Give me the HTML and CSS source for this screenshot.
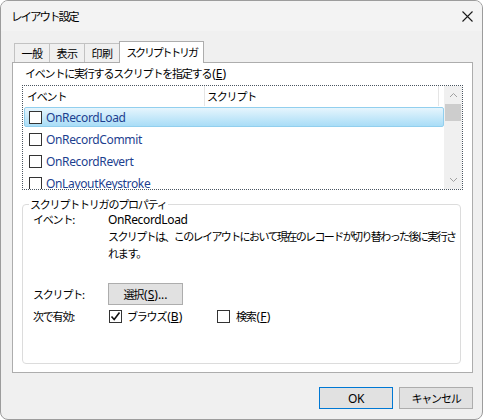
FILE: index.html
```html
<!DOCTYPE html>
<html lang="ja">
<head>
<meta charset="utf-8">
<title>レイアウト設定</title>
<link rel="stylesheet" href="styles.css">
</head>
<body>
<div class="window">
  <div class="titlebar">
    <span class="title">レイアウト設定</span>
    <svg class="close" width="11" height="11" viewBox="0 0 11 11"><path d="M0.5 0.5 L10.5 10.5 M10.5 0.5 L0.5 10.5" stroke="#1a1a1a" stroke-width="1.1" fill="none"/></svg>
  </div>
  <div class="body">
    <div class="tabs">
      <div class="tab">一般</div>
      <div class="tab">表示</div>
      <div class="tab">印刷</div>
      <div class="tab active">スクリプトトリガ</div>
    </div>
    <div class="panel">
      <div class="caption">イベントに実行するスクリプトを指定する<span class="k">(<u>E</u>)</span></div>
      <div class="listbox">
        <div class="listmain">
          <div class="lhead">
            <div class="col1">イベント</div>
            <div class="col2">スクリプト</div>
          </div>
          <div class="row"><div class="rowin sel"><span class="cb"></span><span class="lat">OnRecordLoad</span></div></div>
          <div class="row"><div class="rowin"><span class="cb"></span><span class="lat">OnRecordCommit</span></div></div>
          <div class="row"><div class="rowin"><span class="cb"></span><span class="lat">OnRecordRevert</span></div></div>
          <div class="row"><div class="rowin"><span class="cb"></span><span class="lat">OnLayoutKeystroke</span></div></div>
        </div>
        <div class="scroll">
          <div class="sbtn"><svg width="9" height="6" viewBox="0 0 9 6"><path d="M1 5 L4.5 1.5 L8 5" stroke="#a0a0a0" stroke-width="1" fill="none"/></svg></div>
          <div class="thumb"></div>
          <div class="track"></div>
          <div class="sbtn"><svg width="9" height="6" viewBox="0 0 9 6"><path d="M1 1 L4.5 4.5 L8 1" stroke="#a0a0a0" stroke-width="1" fill="none"/></svg></div>
        </div>
      </div>
      <fieldset class="group">
        <legend>スクリプトトリガのプロパティ</legend>
        <div class="prop">
          <div class="plabel">イベント:</div>
          <div class="pval"><span class="lat">OnRecordLoad</span><br><span class="desc">スクリプトは、このレイアウトにおいて現在のレコードが切り替わった後に実行さ</span><br>れます。</div>
        </div>
        <div class="prop scriptrow">
          <div class="plabel">スクリプト:</div>
          <div class="pval"><button class="btn select">選択<span class="k">(<u>S</u>)...</span></button></div>
        </div>
        <div class="prop enablerow">
          <div class="plabel">次で有効:</div>
          <div class="pval checks">
            <span class="chk browse"><span class="cb checked"><svg width="11" height="11" viewBox="0 0 11 11"><path d="M1.5 5.5 L4.2 8.5 L9.5 1.5" stroke="#111" stroke-width="1.6" fill="none"/></svg></span>ブラウズ<span class="k">(<u>B</u>)</span></span>
            <span class="chk find"><span class="cb"></span>検索<span class="k">(<u>F</u>)</span></span>
          </div>
        </div>
      </fieldset>
    </div>
    <div class="buttons">
      <button class="btn dlg default"><span class="lat">OK</span></button>
      <button class="btn dlg">キャンセル</button>
    </div>
  </div>
</div>
</body>
</html>
```

FILE: styles.css
```css
* { box-sizing: border-box; }
html, body { margin: 0; padding: 0; background: #ffffff; }
.window {
  width: 483px;
  height: 420px;
  border: 1px solid #9c9c9c;
  border-radius: 8px;
  background: #f0f0f0;
  overflow: hidden;
  font-family: "Noto Sans CJK JP", sans-serif;
  font-size: 11px;
  letter-spacing: -1.2px;
  color: #000;
  display: flex;
  flex-direction: column;
}
.lat {
  font-family: "Noto Sans", sans-serif;
  font-size: 12px;
  letter-spacing: -0.35px;
}
.k {
  font-family: "Noto Sans", sans-serif;
  font-size: 12px;
  letter-spacing: 0;
  margin-left: 1px;
}
.titlebar {
  height: 30px;
  display: flex;
  align-items: center;
  justify-content: space-between;
  padding: 0 9px 0 10px;
  background: #f3f3f3;
}
.title { font-size: 11.5px; letter-spacing: -2px; }
.close { display: block; }
.body {
  flex: 1;
  padding: 10px 9px 0 11px;
  display: flex;
  flex-direction: column;
}
.tabs {
  display: flex;
  align-items: flex-end;
  height: 21px;
  padding-left: 2px;
}
.tab {
  width: 36px;
  height: 19px;
  border: 1px solid #c2c2c2;
  border-bottom: none;
  margin-left: -1px;
  background: #f0f0f0;
  display: flex;
  align-items: center;
  justify-content: center;
  line-height: 16px;
  white-space: nowrap;
  letter-spacing: -0.6px;
}
.tab:first-child { margin-left: 0; }
.tab.active {
  width: 85px;
  height: 22px;
  margin-bottom: -1px;
  background: #ffffff;
  border-color: #adadad;
  position: relative;
  z-index: 1;
  padding-bottom: 2px;
  letter-spacing: -2.2px;
}
.panel {
  height: 311px;
  border: 1px solid #adadad;
  background: #ffffff;
  padding: 2px 9px 0 9px;
}
.caption {
  line-height: 16px;
  padding-left: 3px;
  white-space: nowrap;
}
u { text-underline-offset: 1px; }
.listbox {
  margin-top: 3px;
  width: 441px;
  height: 105px;
  border: 1px dotted #4a5560;
  display: flex;
  overflow: hidden;
}
.listmain {
  flex: 1;
  overflow: hidden;
}
.lhead {
  height: 20px;
  display: flex;
  line-height: 20px;
}
.col1 {
  width: 181px;
  padding-left: 4px;
}
.col2 {
  width: 235px;
  border-left: 1px solid #e5e5e5;
  border-right: 1px solid #e5e5e5;
  padding-left: 2px;
}
.row {
  height: 22px;
  padding-top: 1px;
}
.rowin {
  height: 20px;
  margin-left: 1px;
  display: flex;
  align-items: center;
  padding-left: 4px;
  color: #1d3f8f;
  white-space: nowrap;
  border: 1px solid transparent;
}
.rowin.sel {
  background: linear-gradient(#e6f5fd, #a9ddf7);
  border-color: #92cfee;
  border-radius: 2px;
}
.cb {
  width: 13px;
  height: 13px;
  border: 1px solid #333333;
  background: #ffffff;
  margin-right: 4px;
  flex: none;
  display: inline-flex;
  align-items: center;
  justify-content: center;
}
.scroll {
  width: 18px;
  background: #f0f0f0;
  display: flex;
  flex-direction: column;
}
.sbtn {
  height: 18px;
  display: flex;
  align-items: center;
  justify-content: center;
}
.sbtn svg { display: block; }
.thumb {
  height: 17px;
  margin: 0 1px;
  background: #cdcdcd;
}
.track { flex: 1; }
.group {
  margin: 6px 0 0 0;
  width: 439px;
  height: 168px;
  border: 1px solid #dcdcdc;
  border-radius: 4px;
  padding: 0;
}
.group legend {
  margin-left: 6px;
  padding: 0 1px;
  line-height: 16px;
}
.prop {
  display: flex;
  padding-left: 10px;
}
.prop:first-of-type { margin-top: -1px; }
.plabel {
  width: 75px;
  flex: none;
  line-height: 17px;
}
.pval { line-height: 17px; white-space: nowrap; }
.desc { letter-spacing: -1.6px; }
.scriptrow {
  margin-top: 21px;
  height: 22px;
  align-items: center;
}
.enablerow {
  margin-top: 3px;
  align-items: center;
}
.btn {
  font: inherit;
  letter-spacing: inherit;
  color: #000;
  background: #e1e1e1;
  border: 1px solid #adadad;
  border-radius: 0;
  padding: 0;
  height: 22px;
  line-height: 18px;
}
.select { width: 75px; display: block; }
.checks { display: flex; align-items: center; }
.chk { display: flex; align-items: center; }
.chk .cb { margin-left: 1px; margin-right: 5px; }
.chk .cb svg { display: block; }
.browse { width: 108px; }
.find .cb { margin-right: 6px; }
.buttons {
  display: flex;
  justify-content: flex-end;
  gap: 6px;
  margin-top: 14px;
}
.dlg { width: 74px; }
.default { border-color: #0078d4; }
```
